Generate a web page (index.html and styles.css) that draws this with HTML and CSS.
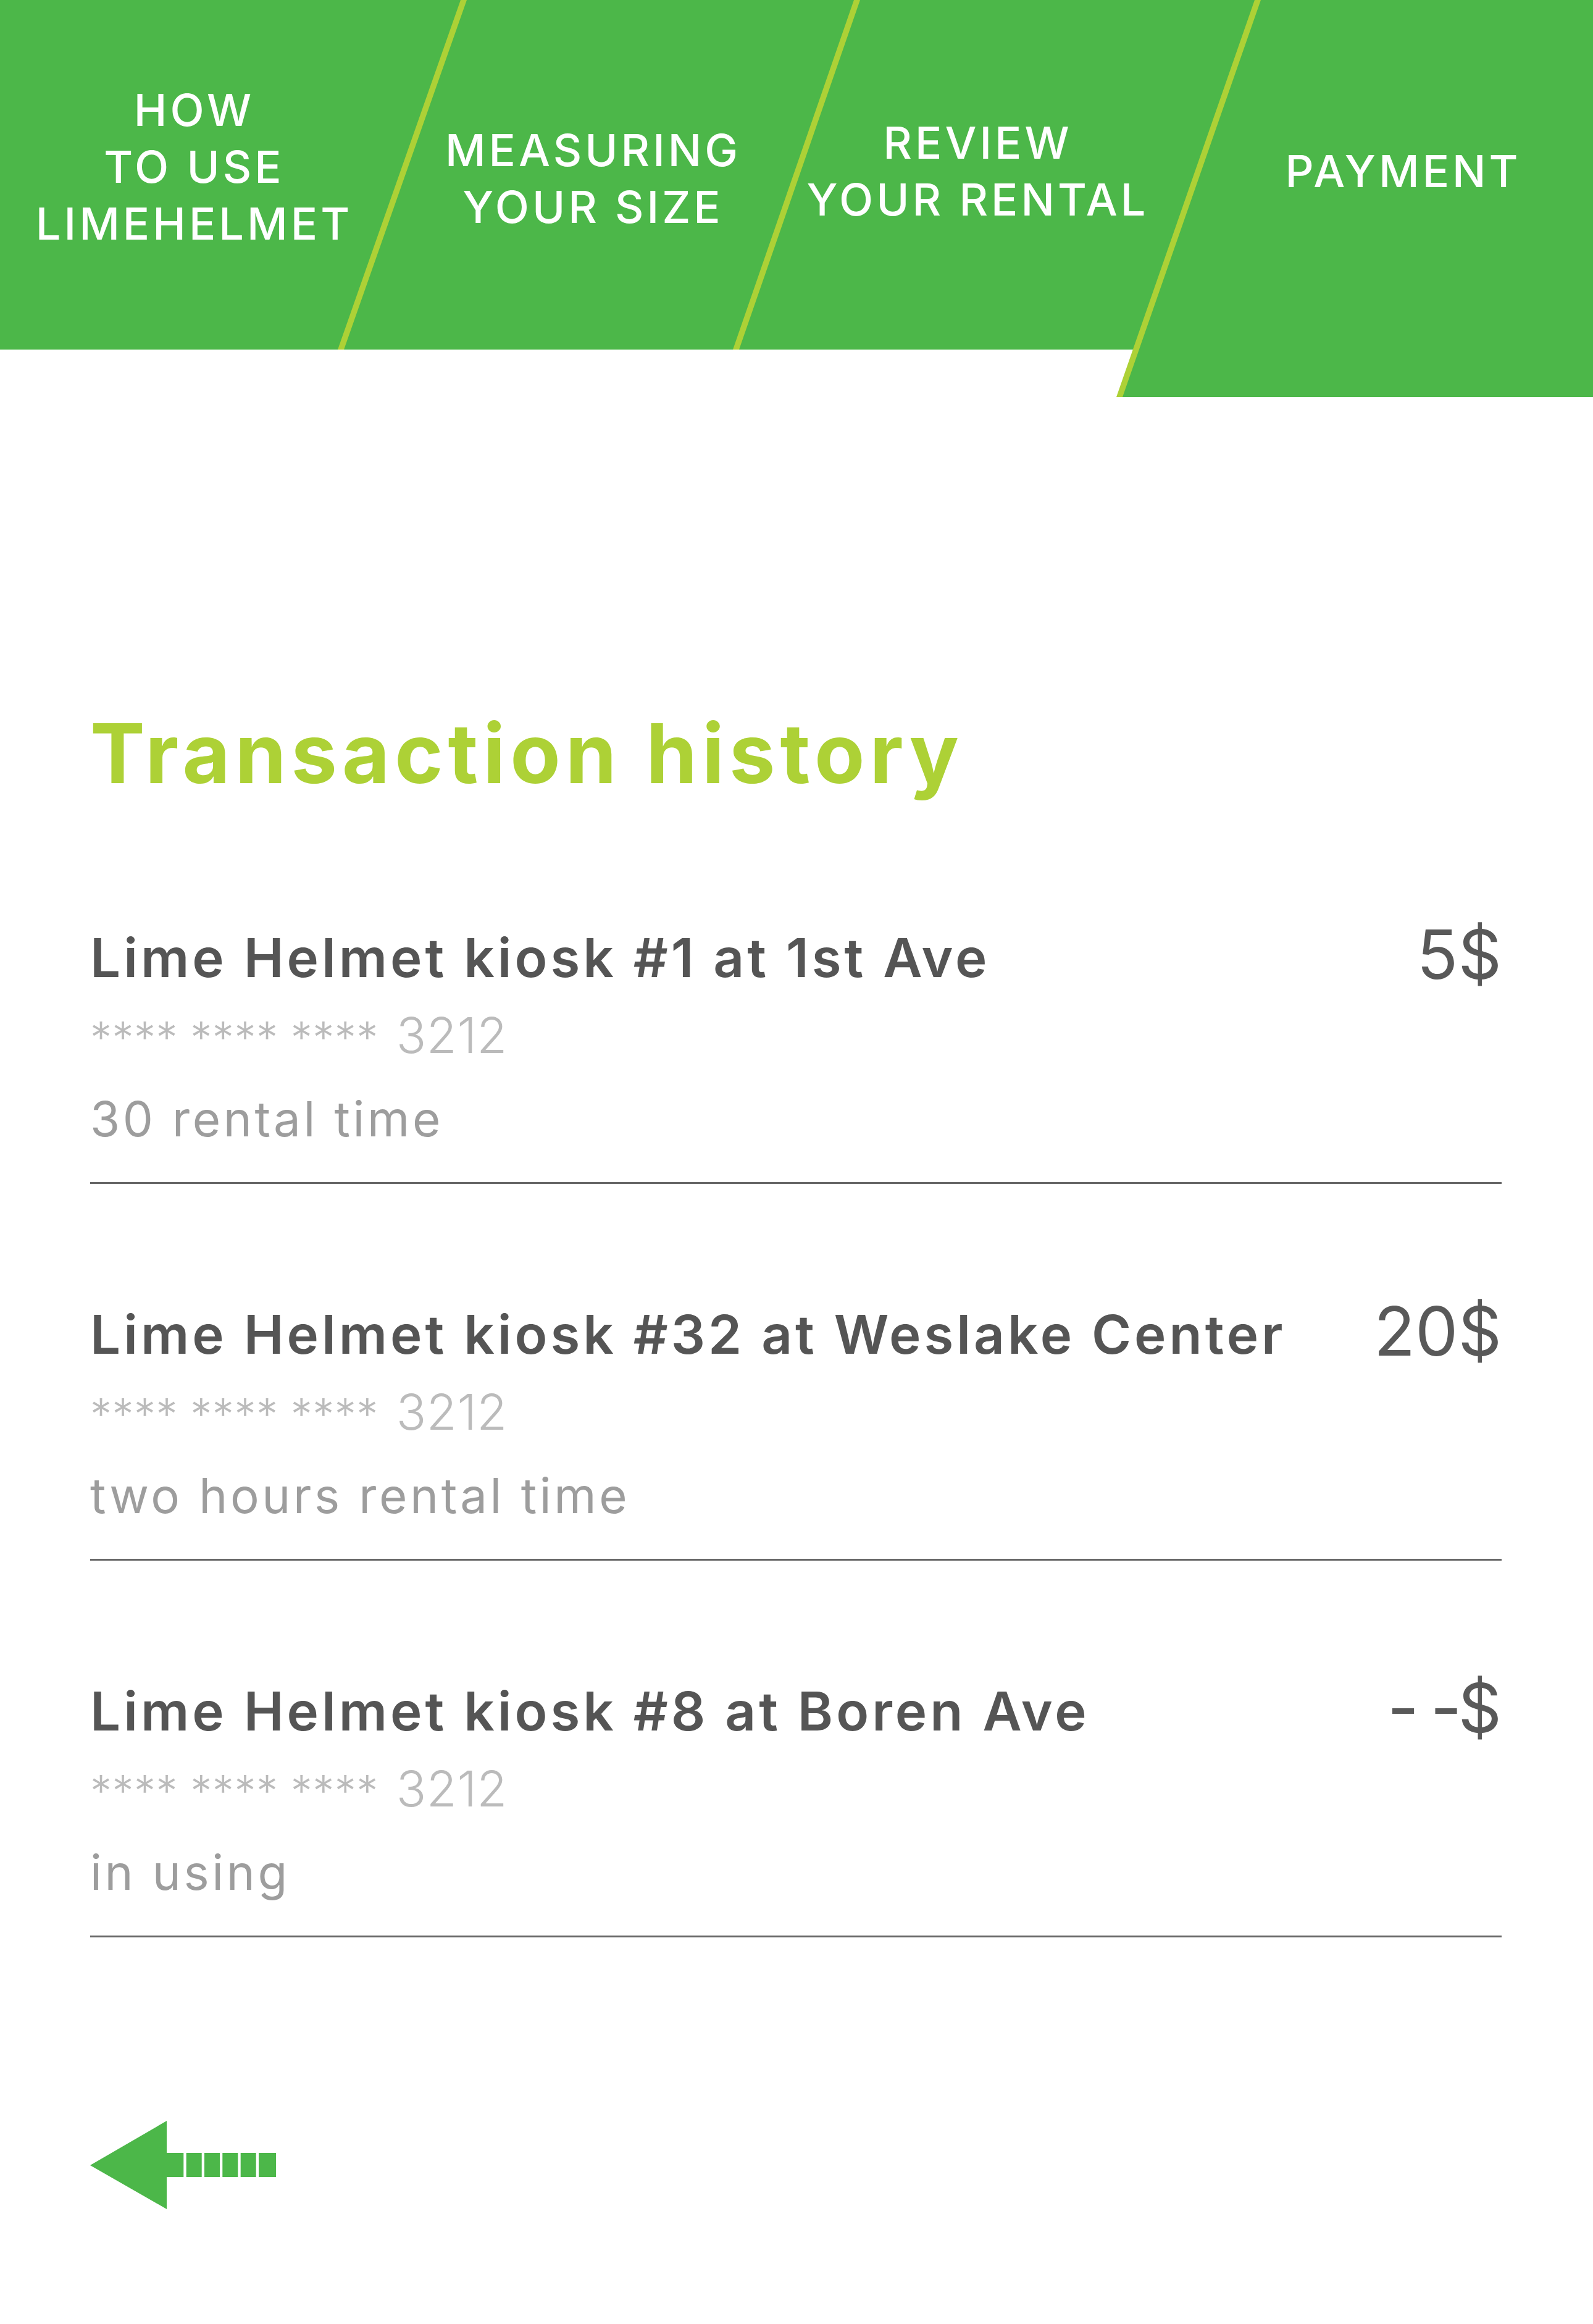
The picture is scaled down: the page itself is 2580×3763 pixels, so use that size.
FILE: index.html
```html
<!DOCTYPE html>
<html lang="en">
<head>
<meta charset="utf-8">
<title>Transaction history</title>
<link rel="stylesheet" href="styles.css">
</head>
<body>
<header class="header">
  <svg class="header-bg" width="2580" height="643" viewBox="0 0 2580 643" aria-hidden="true">
    <rect x="0" y="0" width="2580" height="566" fill="#4cb749"/>
    <polygon points="1840,566 2580,566 2580,643 1813,643" fill="#4cb749"/>
    <polygon points="746,0 756,0 557,566 547,566" fill="#add136"/>
    <polygon points="1383,0 1393,0 1197,566 1187,566" fill="#add136"/>
    <polygon points="2032,0 2042,0 1818,643 1808,643" fill="#add136"/>
  </svg>
  <nav class="tabs">
    <div class="tab tab-how">HOW<br>TO USE<br>LIMEHELMET</div>
    <div class="tab tab-measure">MEASURING<br>YOUR SIZE</div>
    <div class="tab tab-review">REVIEW<br>YOUR RENTAL</div>
    <div class="tab tab-payment">PAYMENT</div>
  </nav>
</header>
<main class="content">
  <h1 class="title">Transaction history</h1>
  <section class="list">
    <div class="row">
      <div class="info">
        <div class="kiosk">Lime Helmet kiosk #1 at 1st Ave</div>
        <div class="card"><span class="stars">**** **** ****</span> 3212</div>
        <div class="time">30 rental time</div>
      </div>
      <div class="price">5$</div>
    </div>
    <div class="row">
      <div class="info">
        <div class="kiosk">Lime Helmet kiosk #32 at Weslake Center</div>
        <div class="card"><span class="stars">**** **** ****</span> 3212</div>
        <div class="time">two hours rental time</div>
      </div>
      <div class="price">20$</div>
    </div>
    <div class="row">
      <div class="info">
        <div class="kiosk">Lime Helmet kiosk #8 at Boren Ave</div>
        <div class="card"><span class="stars">**** **** ****</span> 3212</div>
        <div class="time">in using</div>
      </div>
      <div class="price price-pending">- -$</div>
    </div>
  </section>
  <a class="back" href="#" aria-label="Back">
    <svg width="301" height="144" viewBox="0 0 301 144">
      <polygon points="0,72 124,0 124,52 151.3,52 151.3,91 124,91 124,143" fill="#4cb749"/>
      <rect x="155.7" y="52" width="25" height="39" fill="#4cb749"/>
      <rect x="185" y="52" width="25" height="39" fill="#4cb749"/>
      <rect x="214.3" y="52" width="25" height="39" fill="#4cb749"/>
      <rect x="243.7" y="52" width="25" height="39" fill="#4cb749"/>
      <rect x="273" y="52" width="28" height="39" fill="#4cb749"/>
    </svg>
  </a>
</main>
</body>
</html>
```

FILE: styles.css
```css
html, body {
  margin: 0;
  padding: 0;
  background: #ffffff;
}
body {
  width: 2580px;
  font-family: "Inter", "Liberation Sans", sans-serif;
}
.header {
  position: relative;
  height: 643px;
}
.header-bg {
  position: absolute;
  left: 0;
  top: 0;
  display: block;
}
.tabs {
  position: relative;
  display: grid;
  grid-template-columns: 624px 668px 578px 1fr;
  height: 566px;
}
.tab {
  color: #ffffff;
  font-size: 72px;
  font-weight: 500;
  line-height: 92px;
  text-align: center;
  letter-spacing: 5px;
  padding-left: 5px;
}
.tab-how { padding-top: 132px; }
.tab-measure { padding-top: 197px; }
.tab-review { padding-top: 185px; }
.tab-payment { padding-top: 231px; padding-left: 95px; }

.content {
  padding: 0 148px 0 146px;
}
.title {
  margin: 497px 0 7px 0;
  font-size: 133px;
  line-height: 160px;
  font-weight: 700;
  letter-spacing: 8px;
  color: #add136;
  white-space: nowrap;
}
.row {
  display: flex;
  justify-content: space-between;
  align-items: flex-start;
  padding: 194px 0 52px 0;
  border-bottom: 3px solid #666666;
}
.info {
  display: flex;
  flex-direction: column;
}
.kiosk {
  font-size: 87px;
  line-height: 100px;
  font-weight: 600;
  letter-spacing: 5px;
  color: #555555;
  white-space: nowrap;
}
.card {
  margin-top: 25px;
  font-size: 80px;
  line-height: 100px;
  font-weight: 300;
  letter-spacing: 0.5px;
  word-spacing: 6px;
  color: #bbbbbb;
  white-space: nowrap;
}
.stars {
  font-size: 70px;
  line-height: 1;
  word-spacing: 0;
}
.time {
  margin-top: 36px;
  font-size: 78px;
  line-height: 100px;
  font-weight: 400;
  letter-spacing: 4.6px;
  color: #9d9d9d;
  white-space: nowrap;
}
.price {
  font-size: 110px;
  line-height: 88px;
  font-weight: 400;
  color: #595959;
  white-space: nowrap;
}
.price-pending {
  letter-spacing: -6px;
  margin-right: 6px;
}
.back {
  display: block;
  width: 301px;
  height: 144px;
  margin-top: 297px;
}
.back svg {
  display: block;
}
```
